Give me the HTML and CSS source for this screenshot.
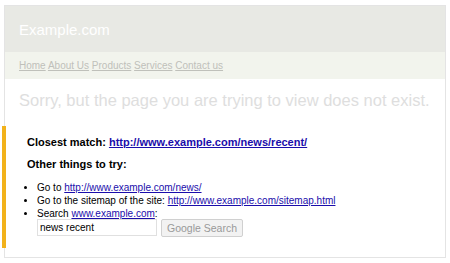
FILE: index.html
```html
<!DOCTYPE html>
<html lang="en">
<head>
    <meta charset="UTF-8">
    <title>Page not found</title>
    <link rel="stylesheet" href="styles.css">
</head>
<body>

    <div class="page">
        <!-- Header -->
        <header>
            <h1>Example.com</h1>
        </header>

        <!-- Nav -->
        <nav>
            <a href="#">Home</a> <a href="#">About Us</a> <a href="#">Products</a> <a href="#">Services</a> <a href="#">Contact us</a>
        </nav>

        <p class="sorry">Sorry, but the page you are trying to view does not exist.</p>

        <div class="suggest">
            <p class="match">Closest match: <a href="#">http://www.example.com/news/recent/</a></p>
            <p class="other">Other things to try:</p>
            <ul>
                <li>Go to <a href="#">http://www.example.com/news/</a></li>
                <li>Go to the sitemap of the site: <a href="#">http://www.example.com/sitemap.html</a></li>
                <li>Search <a href="#">www.example.com</a>:
                    <form class="search">
                        <input type="text" value="news recent">
                        <button type="button">Google Search</button>
                    </form>
                </li>
            </ul>
        </div>
    </div>

</body>
</html>
```

FILE: styles.css
```css
body {
    font-family: 'Liberation Sans', Arial, sans-serif;
    background-color: #fff;
    margin: 0;
    padding: 5px 4px 5px 4px;
}

.page {
    border: 1px solid #e4e4e4;
    height: 253px;
    box-sizing: border-box;
}

/* Header */
header {
    background-color: #e8e9e4;
    height: 46px;
    padding: 0 14px;
    display: flex;
    align-items: center;
}
header h1 {
    margin: 0;
    font-size: 15px;
    font-weight: normal;
    color: #fff;
}

/* Nav */
nav {
    background-color: #f2f4ed;
    height: 27px;
    line-height: 27px;
    padding: 0 14px;
    font-size: 10px;
}
nav a {
    color: #bfc0ba;
}

.sorry {
    margin: 12px 14px 0;
    font-size: 16.5px;
    line-height: 19px;
    color: #dedede;
    white-space: nowrap;
}

/* Suggestions */
.suggest {
    margin: 16px 0 0 -3px;
    border-left: 4px solid #f2b21b;
    padding: 10px 0 11px 21px;
    font-size: 10px;
    color: #000;
}
.suggest a {
    color: #1a0dab;
}
.match,
.other {
    margin: 0;
    font-weight: bold;
    font-size: 11px;
    line-height: 13px;
}
.match {
    margin-bottom: 9px;
}
.other {
    margin-bottom: 10px;
}
ul {
    margin: 0;
    padding-left: 10px;
}
li {
    line-height: 13px;
}

.search {
    display: flex;
    gap: 4px;
    margin-top: -1px;
}
.search input {
    width: 120px;
    height: 17px;
    box-sizing: border-box;
    border: 1px solid #e0e0e0;
    font: 10px 'Liberation Sans', Arial, sans-serif;
    padding: 0 2px;
}
.search button {
    width: 82px;
    height: 18px;
    padding: 0;
    white-space: nowrap;
    border: 1px solid #d0d0d0;
    border-radius: 2px;
    background: #f2f2f2;
    color: #999;
    font: 10.5px 'Liberation Sans', Arial, sans-serif;
}
```
